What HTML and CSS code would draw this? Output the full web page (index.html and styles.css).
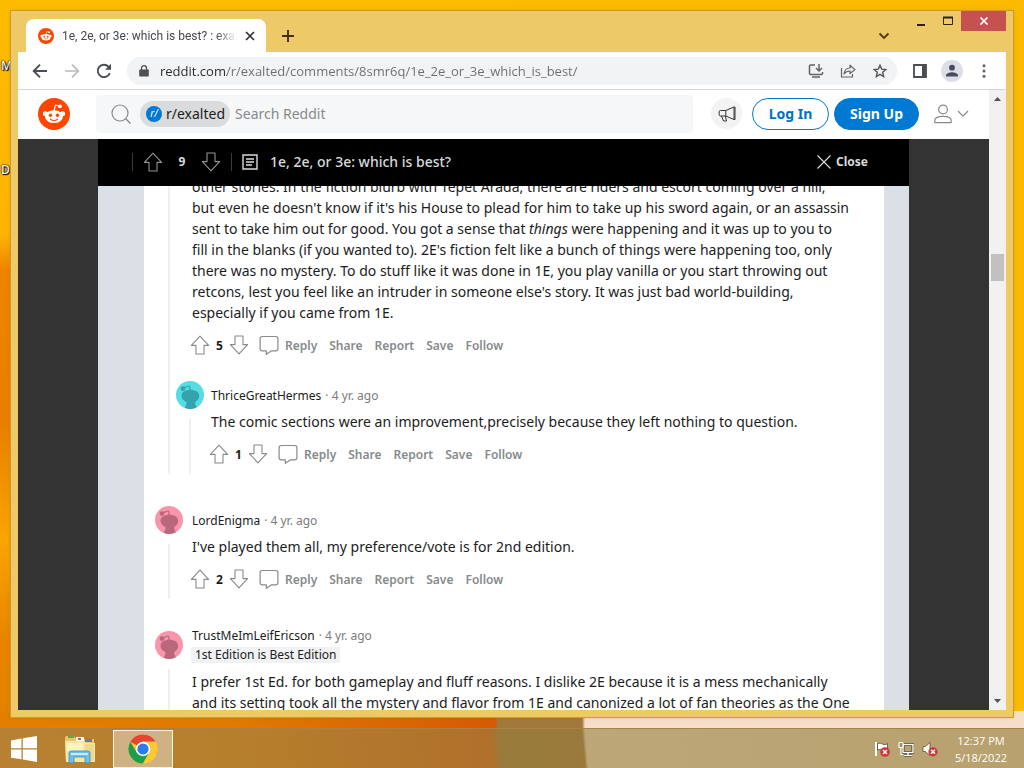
FILE: index.html
```html
<!DOCTYPE html>
<html lang="en">
<head>
<meta charset="utf-8">
<title>1e, 2e, or 3e: which is best? : exalted</title>
<link rel="stylesheet" href="styles.css">
</head>
<body>
<svg class="defs" width="0" height="0" aria-hidden="true">
  <symbol id="snoo" viewBox="0 0 32 32">
    <circle cx="16" cy="16" r="16" fill="#ff4500"/>
    <path d="M16 13.2l1.4-6 4.2.9" fill="none" stroke="#fff" stroke-width="1.2" stroke-linejoin="round"/>
    <circle cx="22" cy="8.3" r="1.9" fill="#fff"/>
    <circle cx="7.4" cy="15.8" r="2.5" fill="#fff"/>
    <circle cx="24.6" cy="15.8" r="2.5" fill="#fff"/>
    <ellipse cx="16" cy="18.6" rx="9" ry="6.4" fill="#fff"/>
    <circle cx="12.5" cy="17.3" r="1.7" fill="#ff4500"/>
    <circle cx="19.5" cy="17.3" r="1.7" fill="#ff4500"/>
    <path d="M12.4 21.2q3.6 2.6 7.2 0" fill="none" stroke="#ff4500" stroke-width="1.1" stroke-linecap="round"/>
  </symbol>
  <symbol id="up" viewBox="0 0 20 20"><path d="M10 1.1L18.6 10.4H14V19H6V10.4H1.4Z" fill="none" stroke="currentColor" stroke-width="1.1" stroke-linejoin="round"/></symbol>
  <symbol id="down" viewBox="0 0 20 20"><path d="M10 18.9L18.6 9.6H14V1H6V9.6H1.4Z" fill="none" stroke="currentColor" stroke-width="1.1" stroke-linejoin="round"/></symbol>
  <symbol id="bubble" viewBox="0 0 20 20"><path d="M7.3 19.3V15.9H3.2A2.1 2.1 0 0 1 1.1 13.800V3.600A2.1 2.1 0 0 1 3.200 1.500H16.800A2.1 2.1 0 0 1 18.900 3.600V13.800A2.1 2.1 0 0 1 16.800 15.900H12.200Z" fill="none" stroke="currentColor" stroke-width="1.2" stroke-linejoin="round"/></symbol>
  <symbol id="avatar" viewBox="0 0 28 28">
    <circle cx="14" cy="14" r="14" fill="currentColor"/>
    <path d="M5.500 15c0-4 4-6.200 8.900-6.200s8.800 2.200 8.800 6.200c0 2.500-1.600 4.700-4 5.900v2.100l1.600 3.300a14 14 0 0 1-12 .4l1.700-3.700v-2c-2.700-1.100-5-3.400-5-6z"/>
    <circle cx="7" cy="7.600" r="2.400"/>
    <path d="M12.800 4.500l1 .2 1.200 4.300h-1.400zM8 6l5-1.500.3.900L8.500 7z"/>
  </symbol>
</svg>

<div class="desktop">
  <span class="shortcut shortcut-one">M</span>
  <span class="shortcut shortcut-two">D</span>

  <div class="window">
    <div class="titlebar">
      <div class="tab">
        <svg class="favicon"><use href="#snoo"/></svg>
        <span class="tab-title">1e, 2e, or 3e: which is best? : exalted</span>
        <button class="plain tab-close" aria-label="Close tab"><svg width="10" height="10" viewBox="0 0 10 10"><path d="M1 1l8 8M9 1l-8 8" stroke="#333" stroke-width="1.700"/></svg></button>
      </div>
      <button class="plain new-tab" aria-label="New tab"><svg width="14" height="14" viewBox="0 0 14 14"><path d="M7 1v12M1 7h12" stroke="#3d3117" stroke-width="1.900"/></svg></button>
      <button class="plain tab-search" aria-label="Search tabs"><svg width="12" height="8" viewBox="0 0 12 8"><path d="M1.500 1.500L6 6l4.500-4.500" fill="none" stroke="#4a3a18" stroke-width="1.800"/></svg></button>
      <div class="controls">
        <button class="plain control" aria-label="Minimize"><svg width="10" height="12" viewBox="0 0 10 12"><path d="M1 10h8" stroke="#2b2110" stroke-width="2"/></svg></button>
        <button class="plain control" aria-label="Maximize"><svg width="12" height="12" viewBox="0 0 12 12"><path d="M1.500 2.500h9v7h-9z" fill="none" stroke="#2b2110"/><path d="M1 2.500h10" stroke="#2b2110" stroke-width="2"/></svg></button>
        <button class="plain control control-close" aria-label="Close"><svg width="10" height="8" viewBox="0 0 10 8"><path d="M1.500 .5l7 7M8.500 .5l-7 7" stroke="#fff" stroke-width="1.700"/></svg></button>
      </div>
    </div>

    <div class="toolbar">
      <button class="plain tool" aria-label="Back"><svg width="16" height="16" viewBox="0 0 16 16"><path d="M15 8H2M8 1.700L1.700 8 8 14.300" fill="none" stroke="#4a4d51" stroke-width="1.900"/></svg></button>
      <button class="plain tool" aria-label="Forward"><svg width="16" height="16" viewBox="0 0 16 16"><path d="M1 8h13M8 1.700L14.300 8 8 14.300" fill="none" stroke="#b9bbbe" stroke-width="1.700"/></svg></button>
      <button class="plain tool" aria-label="Reload"><svg width="16" height="16" viewBox="0 0 16 16"><path d="M13.800 10A6.200 6.200 0 1 1 12.500 3.700L14 5.200" fill="none" stroke="#4a4d51" stroke-width="1.900"/><path d="M15 .8v6H9z" fill="#4a4d51"/></svg></button>
      <div class="omnibox">
        <svg class="lock" width="10" height="12" viewBox="0 0 10 12"><path d="M1 4.500h8a.8.8 0 0 1 .8.800v5.400a.8.8 0 0 1-.8.800H1a.8.8 0 0 1-.8-.800V5.300A.8.8 0 0 1 1 4.500z" fill="#4d5054"/><path d="M2.500 5V3.200a2.500 2.500 0 0 1 5 0V5" fill="none" stroke="#4d5054" stroke-width="1.300"/></svg>
        <input class="url" aria-label="Address" value="reddit.com/r/exalted/comments/8smr6q/1e_2e_or_3e_which_is_best/">
        <button class="plain tool" aria-label="Install"><svg width="16" height="14" viewBox="0 0 16 14"><path d="M7 1H2.500Q1.500 1 1.500 2v7.500q0 1 1 1h11q1 0 1-1V8M4 13h8" fill="none" stroke="#5f6368" stroke-width="1.500"/><path d="M11 0v6M8 4l3 3 3-3" fill="none" stroke="#5f6368" stroke-width="1.500"/></svg></button>
        <button class="plain tool" aria-label="Share"><svg width="16" height="14" viewBox="0 0 16 14"><path d="M1.500 4v9h11v-3" fill="none" stroke="#5f6368" stroke-width="1.200"/><path d="M4 10c.500-4 3-6 6-6V1.200L15 5.600 10 9.500V7C7.500 7 5.500 8 4 10z" fill="none" stroke="#5f6368" stroke-width="1.200" stroke-linejoin="round"/></svg></button>
        <button class="plain tool" aria-label="Bookmark"><svg width="14" height="14" viewBox="0 0 14 14"><path d="M7 1.200l1.700 3.900 4.200.400-3.200 2.800 1 4.200L7 10.300l-3.700 2.200 1-4.200L1.100 5.500l4.200-.400z" fill="none" stroke="#4f5358" stroke-width="1.400"/></svg></button>
      </div>
      <button class="plain tool" aria-label="Side panel"><svg width="14" height="14" viewBox="0 0 14 14"><path d="M1 1h12v12H1z" fill="none" stroke="#4a4d51" stroke-width="1.800"/><path d="M9 1h4v12H9z" fill="#4a4d51"/></svg></button>
      <button class="plain tool" aria-label="Profile"><svg width="22" height="22" viewBox="0 0 22 22"><circle cx="11" cy="11" r="11" fill="#dcdfe8"/><circle cx="11" cy="7.700" r="2.900" fill="#484d5e"/><path d="M5 16.500v-1.300c0-2 4-3 6-3s6 1 6 3v1.300z" fill="#484d5e"/></svg></button>
      <button class="plain tool" aria-label="Menu"><svg width="4" height="14" viewBox="0 0 4 14"><g fill="#5f6368"><circle cx="2" cy="1.800" r="1.500"/><circle cx="2" cy="7" r="1.500"/><circle cx="2" cy="12.200" r="1.500"/></g></svg></button>
    </div>

    <div class="viewport">
      <div class="page">
        <header class="site-header">
          <a class="logo" href="#" aria-label="Reddit home"><svg width="32" height="32"><use href="#snoo"/></svg></a>
          <form class="search" role="search">
            <svg width="20" height="20" viewBox="0 0 20 20"><circle cx="9" cy="9" r="8" fill="none" stroke="#878a8c" stroke-width="1.200"/><path d="M14.700 14.700L19.500 19.500" stroke="#878a8c" stroke-width="1.300"/></svg>
            <span class="scope"><span class="scope-icon">r/</span>r/exalted</span>
            <input class="search-input" type="search" aria-label="Search Reddit" placeholder="Search Reddit">
          </form>
          <button class="plain promo" aria-label="Advertise"><svg width="18" height="18" viewBox="0 0 18 18"><path d="M2.500 5.500H7.800L16 2v12.500L7.800 11H2.500Q1.200 11 1.200 9.700V6.800Q1.200 5.500 2.500 5.500zM7.800 5.500V11M3.500 11l2 5h3l-1.200-5M16 2h1v12.500h-1" fill="none" stroke="#333" stroke-linejoin="round"/></svg></button>
          <button class="pill pill-outline">Log In</button>
          <button class="pill pill-solid">Sign Up</button>
          <button class="plain account" aria-label="Account menu">
            <svg width="18" height="20" viewBox="0 0 18 20"><circle cx="9" cy="5.500" r="4.400" fill="none" stroke="#878a8c" stroke-width="1.200"/><path d="M.8 18.600v-2c0-3 3-4.300 8.200-4.300s8.200 1.300 8.200 4.300v2z" fill="none" stroke="#878a8c" stroke-width="1.200" stroke-linejoin="round"/></svg>
            <svg width="12" height="8" viewBox="0 0 12 8"><path d="M1 1l5 5.200L11 1" fill="none" stroke="#878a8c" stroke-width="1.200"/></svg>
          </button>
        </header>

        <main class="overlay">
          <div class="post-bar">
            <div class="post-votes">
              <button class="plain" aria-label="Upvote post"><svg width="20" height="20"><use href="#up"/></svg></button>
              <span class="post-score">9</span>
              <button class="plain" aria-label="Downvote post"><svg width="20" height="20"><use href="#down"/></svg></button>
            </div>
            <svg width="16" height="16" viewBox="0 0 16 16"><path d="M1 1h14v14H1z" fill="none" stroke="#d7dadc" stroke-width="1.400"/><path d="M4 5h8M4 8h8M4 11h6" stroke="#d7dadc" stroke-width="1.300"/></svg>
            <h1 class="post-title">1e, 2e, or 3e: which is best?</h1>
            <button class="plain close"><svg width="14" height="14" viewBox="0 0 14 14"><path d="M.500 .5l13 13M13.500 .5l-13 13" stroke="#d7dadc" stroke-width="1.200"/></svg>Close</button>
          </div>

          <div class="post-body">
            <section class="comments">
              <article class="thread">
                <div class="thread-line"></div>
                <div class="thread-main">
                  <div class="thread-text">
                    <p class="text">other stories. In the fiction blurb with Tepet Arada, there are riders and escort coming over a hill, but even he doesn't know if it's his House to plead for him to take up his sword again, or an assassin sent to take him out for good. You got a sense that <em>things</em> were happening and it was up to you to fill in the blanks (if you wanted to). 2E's fiction felt like a bunch of things were happening too, only there was no mystery. To do stuff like it was done in 1E, you play vanilla or you start throwing out retcons, lest you feel like an intruder in someone else's story. It was just bad world-building, especially if you came from 1E.</p>
                    <div class="actions">
                      <button class="plain" aria-label="Upvote"><svg width="20" height="20"><use href="#up"/></svg></button><span class="score">5</span><button class="plain" aria-label="Downvote"><svg width="20" height="20"><use href="#down"/></svg></button>
                      <button class="action reply-action"><svg width="20" height="20"><use href="#bubble"/></svg>Reply</button><button class="action">Share</button><button class="action">Report</button><button class="action">Save</button><button class="action">Follow</button>
                    </div>
                  </div>
                  <div class="comment reply">
                    <div class="gutter"><svg class="avatar teal"><use href="#avatar"/></svg><div class="line"></div></div>
                    <div class="content">
                      <div class="byline"><a class="author" href="#">ThriceGreatHermes</a><span class="time">· 4 yr. ago</span></div>
                      <p class="text">The comic sections were an improvement,precisely because they left nothing to question.</p>
                      <div class="actions">
                        <button class="plain" aria-label="Upvote"><svg width="20" height="20"><use href="#up"/></svg></button><span class="score">1</span><button class="plain" aria-label="Downvote"><svg width="20" height="20"><use href="#down"/></svg></button>
                        <button class="action reply-action"><svg width="20" height="20"><use href="#bubble"/></svg>Reply</button><button class="action">Share</button><button class="action">Report</button><button class="action">Save</button><button class="action">Follow</button>
                      </div>
                    </div>
                  </div>
                </div>
              </article>

              <article class="comment">
                <div class="gutter"><svg class="avatar pink"><use href="#avatar"/></svg><div class="line"></div></div>
                <div class="content">
                  <div class="byline"><a class="author" href="#">LordEnigma</a><span class="time">· 4 yr. ago</span></div>
                  <p class="text">I've played them all, my preference/vote is for 2nd edition.</p>
                  <div class="actions">
                    <button class="plain" aria-label="Upvote"><svg width="20" height="20"><use href="#up"/></svg></button><span class="score">2</span><button class="plain" aria-label="Downvote"><svg width="20" height="20"><use href="#down"/></svg></button>
                    <button class="action reply-action"><svg width="20" height="20"><use href="#bubble"/></svg>Reply</button><button class="action">Share</button><button class="action">Report</button><button class="action">Save</button><button class="action">Follow</button>
                  </div>
                </div>
              </article>

              <article class="comment">
                <div class="gutter"><svg class="avatar pink"><use href="#avatar"/></svg><div class="line"></div></div>
                <div class="content">
                  <div class="byline byline-tight"><a class="author" href="#">TrustMeImLeifEricson</a><span class="time">· 4 yr. ago</span></div>
                  <span class="flair">1st Edition is Best Edition</span>
                  <p class="text">I prefer 1st Ed. for both gameplay and fluff reasons. I dislike 2E because it is a mess mechanically and its setting took all the mystery and flavor from 1E and canonized a lot of fan theories as the One</p>
                </div>
              </article>
            </section>
          </div>
        </main>
      </div>

      <div class="scrollbar">
        <svg width="7" height="4" viewBox="0 0 7 4"><path d="M0 4L3.500 0 7 4z" fill="#505050"/></svg>
        <div class="track"><div class="thumb"></div></div>
        <svg width="7" height="4" viewBox="0 0 7 4"><path d="M0 0l3.500 4L7 0z" fill="#505050"/></svg>
      </div>
    </div>
  </div>
</div>

<footer class="taskbar">
  <button class="plain task" aria-label="Start"><svg width="28" height="26" viewBox="0 0 28 26"><path d="M1 4.400L11.500 2.600V12.300H1zM12.800 2.300L27 0V12.300H12.800zM1 13.600H11.500V23.300L1 21.700zM12.800 13.600H27V26L12.800 23.600z" fill="#fff"/></svg></button>
  <button class="plain task" aria-label="File Explorer"><svg width="32" height="30" viewBox="0 0 32 30">
    <path d="M1 4q0-2 2-2h7l2 3h18v23H2z" fill="#e9c768"/><path d="M4 1h6v3H4z" fill="#6aa04d"/><path d="M12 3h8v4h-8z" fill="#fff"/><path d="M14 4h3v2h-3z" fill="#d9534a"/><path d="M21 5h7v3h-7z" fill="#4f86b8"/>
    <path d="M1 7h19l2 2h9v19H2z" fill="#f7e7a3"/><path d="M3 9h16v8H3z" fill="#fcf2c2"/><path d="M21 10h9v17h-9z" fill="#efd98b"/>
    <path d="M5 29V19q0-2 2-2h17q2 0 2 2v10h-5v-6H10v6z" fill="#70bfe6" stroke="#378dba" stroke-width=".8"/><path d="M7 19h17v2H7z" fill="#c6eafa"/></svg></button>
  <button class="plain task task-active" aria-label="Google Chrome"><svg width="30" height="30" viewBox="0 0 30 30">
    <circle cx="15" cy="15" r="14.500" fill="#fcc934"/><path d="M15 15L2.440 7.750A14.500 14.500 0 0 1 27.560 7.750H15z" fill="#ea4335"/><path d="M2.440 7.750A14.500 14.500 0 0 0 15 29.500L21.300 18.600 15 15 8.700 18.600z" fill="#1e9e4a"/><path d="M15 7.750H27.560A14.500 14.500 0 0 1 15 29.500L21.300 18.600z" fill="#fcc934"/>
    <circle cx="15" cy="15" r="7.200" fill="#fff"/><circle cx="15" cy="15" r="5.600" fill="#2b7de9"/></svg></button>
  <div class="tray">
    <svg width="16" height="16" viewBox="0 0 16 16"><path d="M2 1v14" stroke="#fff" stroke-width="2"/><path d="M3.500 2.500q3-1 5 .5t5-.3v6.500q-3 1-5-.200t-5 0z" fill="#fff" stroke="#4f432a" stroke-width=".8"/><circle cx="11" cy="11" r="4.800" fill="#cf3538"/><path d="M9 9l4 4M13 9l-4 4" stroke="#fff" stroke-width="1.500"/></svg>
    <svg width="16" height="16" viewBox="0 0 16 16"><path d="M5 3.500h10v8H5zM10 12v2M6 14.500h8" fill="none" stroke="#443a25" stroke-width="3"/><path d="M5 3.500h10v8H5zM10 12v2M6 14.500h8" fill="none" stroke="#fff" stroke-width="1.400"/><rect x="1" y="1.500" width="4" height="5" rx="1" fill="#a08b5b" stroke="#fff" stroke-width="1.200"/><path d="M3 6.500v7h2" fill="none" stroke="#fff" stroke-width="1.200"/></svg>
    <svg width="16" height="16" viewBox="0 0 16 16"><path d="M1 5.500h2.500L8 1.500v13L3.500 10.500H1z" fill="#fff" stroke="#4f432a" stroke-width=".7"/><circle cx="11" cy="10.800" r="4.600" fill="#cf3538"/><path d="M9 8.800l4 4M13 8.800l-4 4" stroke="#fff" stroke-width="1.500"/></svg>
    <div class="clock"><span>12:37 PM</span><span>5/18/2022</span></div>
  </div>
</footer>
</body>
</html>
```
FILE: styles.css
```css
* { box-sizing: border-box; }

body {
  margin: 0;
  height: 100vh;
  display: flex;
  flex-direction: column;
  overflow: hidden;
  font-family: "Noto Sans", sans-serif;
  background:
    linear-gradient(90deg, #e27f00 0, #e07a00 240px, #d65a05 495px, #a1793a 498px, #a1793a 582px, #f6dfca 585px) 0 100% / 100% 57px no-repeat,
    linear-gradient(180deg, #fdbc00 0, #fdb400 235px, #ee8400 270px, #e87f00 420px, #f9a500 540px, #e88400 640px, #e27f00 100%) 0 0 / 50% 100% no-repeat,
    #fbbb00;
}

.defs { position: absolute; }
svg { display: block; flex: none; }

.plain {
  border: 0;
  padding: 0;
  background: none;
  font: inherit;
  color: inherit;
  display: flex;
  align-items: center;
  justify-content: center;
}

/* Desktop and window frame */
.desktop {
  position: relative;
  flex: 1;
  min-height: 0;
  padding: 11px;
  display: flex;
}
.shortcut {
  position: absolute;
  left: 1px;
  font-size: 12px;
  font-weight: 500;
  line-height: 16px;
  color: #fff;
  text-shadow: 1px 1px 1px #000, 0 0 2px #000, 0 0 1px #000;
}
.shortcut-one { top: 58px; }
.shortcut-two { top: 162px; }
.window {
  position: relative;
  flex: 1;
  min-width: 0;
  display: flex;
  flex-direction: column;
  padding: 0 7px 7px;
  background: #eec967;
  box-shadow: 0 0 0 1px #cf9a2c, 0 0 4px #9a6a0066;
}

.titlebar { display: flex; height: 41px; align-items: flex-end; }
.tab {
  width: 240px;
  height: 33px;
  margin-left: 8px;
  padding: 0 11px 0 12px;
  display: flex;
  align-items: center;
  gap: 8px;
  background: #fff;
  border-radius: 8px 8px 0 0;
}
.favicon { width: 16px; height: 16px; }
.tab-title {
  flex: 1;
  min-width: 0;
  font-family: Roboto, sans-serif;
  font-size: 12px;
  color: #45484c;
  white-space: nowrap;
  overflow: hidden;
  mask-image: linear-gradient(90deg, #000 88%, transparent);
}
.new-tab { width: 28px; height: 33px; margin-left: 8px; }
.tab-search { width: 28px; height: 32px; margin-left: auto; margin-right: 9px; }
.controls { display: flex; align-self: flex-start; }
.control { width: 27px; height: 20px; }
.control-close { width: 45px; background: #c75050; }

.toolbar {
  height: 38px;
  padding: 0 8px;
  display: flex;
  align-items: center;
  gap: 4px;
  background: #fff;
  border-bottom: 1px solid #d5d6d8;
}
.tool { width: 28px; height: 28px; }
.omnibox {
  flex: 1;
  min-width: 0;
  height: 28px;
  margin: 0 5px;
  padding: 0 3px 0 12px;
  display: flex;
  align-items: center;
  gap: 4px;
  background: #f1f3f4;
  border-radius: 14px;
}
.url {
  flex: 1;
  min-width: 0;
  margin-left: 7px;
  padding: 0;
  border: 0;
  font-family: "Open Sans", sans-serif;
  font-size: 13px;
  color: transparent;
  background: linear-gradient(90deg, #27292c 67px, #6a6e73 67px);
  background-clip: text;
  -webkit-background-clip: text;
}

/* Page */
.viewport { flex: 1; min-height: 0; display: flex; background: #fff; }
.page { flex: 1; min-width: 0; display: flex; flex-direction: column; }
.site-header {
  height: 49px;
  padding: 0 20px 2px;
  display: flex;
  align-items: center;
  background: #fff;
}
.search {
  flex: 1;
  min-width: 0;
  height: 38px;
  margin: 0 18px 0 26px;
  padding: 0 15px;
  display: flex;
  align-items: center;
  background: #f6f7f8;
  border-radius: 4px;
}
.scope {
  height: 26px;
  margin: 0 5px 0 9px;
  padding: 0 5px 0 6px;
  display: flex;
  align-items: center;
  gap: 4px;
  border-radius: 13px;
  background: #dadbdc;
  font-size: 14px;
  color: #1c1c1c;
}
.scope-icon {
  width: 16px;
  height: 16px;
  border-radius: 50%;
  background: #0079d3;
  color: #fff;
  font-size: 10px;
  font-style: italic;
  line-height: 15px;
  text-align: center;
}
.search-input {
  flex: 1;
  min-width: 0;
  padding: 0;
  border: 0;
  background: none;
  font: 14px "Noto Sans", sans-serif;
}
.search-input::placeholder { color: #878a8c; }
.promo { width: 31px; height: 31px; border-radius: 50%; background: #f3f3f3; margin-right: 10px; }
.pill {
  height: 32px;
  padding: 0 15px;
  border: 1px solid #0079d3;
  border-radius: 16px;
  font: 700 14px "Noto Sans", sans-serif;
}
.pill-outline { min-width: 77px; margin-right: 5px; background: #fff; color: #0071c5; }
.pill-solid { background: #0079d3; color: #fff; }
.account { gap: 5px; margin-left: 15px; }

.overlay {
  flex: 1;
  min-height: 0;
  padding: 0 80px;
  display: flex;
  flex-direction: column;
  background: #333;
}
.post-bar {
  height: 47px;
  flex: none;
  padding: 0 41px 2px 34px;
  display: flex;
  align-items: center;
  background: #000;
  color: #d7dadc;
}
.post-votes {
  height: 18px;
  margin-right: 10px;
  padding: 0 10px;
  display: flex;
  align-items: center;
  border: solid #3a3b3c;
  border-width: 0 1px;
  color: #909294;
}
.post-score { width: 38px; text-align: center; font-size: 12px; font-weight: 700; color: #d7dadc; }
.post-title { margin: 0 auto 0 12px; font-size: 14px; font-weight: 500; line-height: 20px; }
.close { gap: 5px; font-size: 12px; font-weight: 700; }

.post-body {
  flex: 1;
  min-height: 0;
  padding: 0 25px 0 46px;
  background: #dae0e6;
  overflow: hidden;
}
.comments {
  min-height: 100%;
  margin-top: -10px;
  padding: 0 34px 0 11px;
  background: #fff;
}
.text { margin: 0; padding-left: 1px; font-size: 14px; line-height: 21px; color: #1c1c1c; }
.thread { display: flex; margin-bottom: 31px; }
.thread-line { width: 2px; margin: 0 6px 0 13px; background: #edeff1; }
.thread-main { flex: 1; min-width: 0; }
.thread-text { margin: 0 0 23px 15px; }

.comment { display: flex; gap: 8px; margin-bottom: 31px; }
.reply { gap: 6px; margin-bottom: 0; }
.gutter { width: 28px; padding-top: 1px; display: flex; flex-direction: column; align-items: center; }
.line { flex: 1; width: 2px; margin-top: 10px; background: #edeff1; }
.avatar { width: 28px; height: 28px; }
.teal { color: #55dde6; fill: #35a3ad; }
.pink { color: #f995ab; fill: #b9687b; }
.content { flex: 1; min-width: 0; padding-bottom: 8px; }
.byline { height: 31px; padding-left: 1px; display: flex; align-items: center; gap: 4px; font-size: 12px; }
.byline-tight { height: 16px; margin-top: -3px; }
.author { color: #1c1c1c; text-decoration: none; }
.time { color: #7c7c7c; }
.flair {
  display: inline-block;
  margin: 4px 0 8px;
  padding: 0 4px;
  border-radius: 2px;
  background: #f1f2f3;
  font-size: 12px;
  line-height: 16px;
  color: #1c1c1c;
  vertical-align: top;
}

.actions { height: 24px; margin: 10px 0 0 -1px; display: flex; align-items: center; color: #878a8c; }
.score { width: 19px; text-align: center; font-size: 12px; font-weight: 700; color: #1c1c1c; }
.action {
  border: 0;
  padding: 0;
  margin-right: 12px;
  background: none;
  display: flex;
  align-items: center;
  gap: 6px;
  font: 600 12px "Noto Sans", sans-serif;
  color: #878a8c;
}
.reply-action { margin-left: 10px; }

.scrollbar {
  width: 17px;
  padding: 7px 0;
  display: flex;
  flex-direction: column;
  align-items: center;
  background: #f1f1f1;
}
.track { position: relative; flex: 1; width: 13px; margin: 6px 0; }
.thumb { position: absolute; top: 25%; width: 100%; height: 27px; background: #c1c1c1; }

/* Taskbar */
.taskbar {
  position: relative;
  height: 40px;
  flex: none;
  display: flex;
  align-items: center;
  border-top: 1px solid #a98045;
  background: linear-gradient(85deg, #b88132 0, #b67f2c 240px, #b0702c 492px, #987b3a 500px, #9a7a3c 583px, #bda778 586px, #b8a16e 100%);
}
.task { width: 57px; height: 38px; }
.task:first-child { width: 47px; }
.task:nth-child(2) { width: 66px; }
.task-active { width: 60px; background: #d0b184; border: 1px solid #fff5df; }
.tray { margin-left: auto; padding-right: 17px; display: flex; align-items: center; gap: 8px; }
.clock {
  margin-left: 9px;
  display: flex;
  flex-direction: column;
  align-items: center;
  font: 11px/17px "Open Sans", sans-serif;
  color: #fff;
}
```
